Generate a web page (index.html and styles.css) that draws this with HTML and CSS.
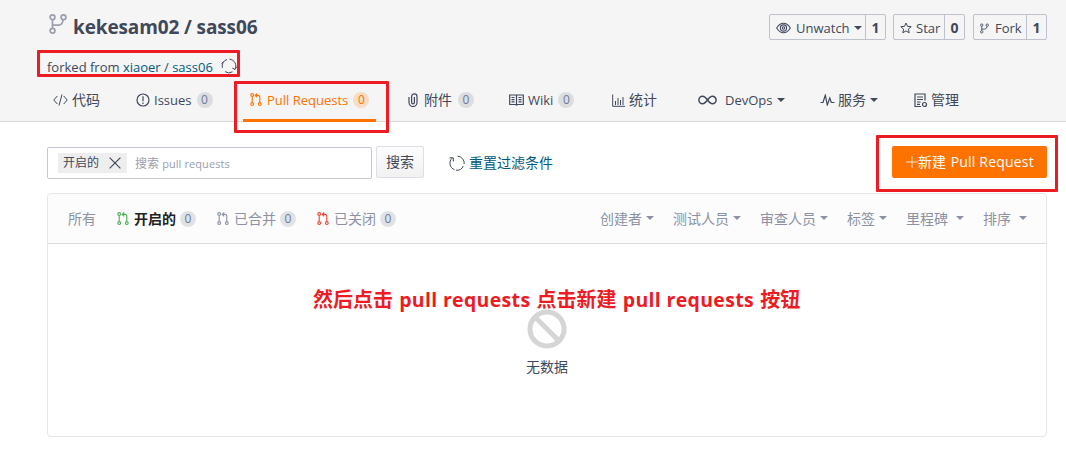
FILE: index.html
```html
<!DOCTYPE html>
<html lang="zh-CN">
<head>
<meta charset="utf-8">
<title>kekesam02 / sass06 - Pull Requests</title>
<link rel="stylesheet" href="styles.css">
</head>
<body>
<svg class="defs" width="0" height="0" aria-hidden="true">
  <symbol id="pr" viewBox="0 0 12 13"><g fill="none" stroke="currentColor" stroke-width="1.1"><circle cx="2.2" cy="2" r="1.4"/><circle cx="2.2" cy="11" r="1.4"/><circle cx="9.8" cy="11" r="1.4"/><path d="M2.2 3.5v6M9.8 9.5V4.2Q9.8 2.4 8 2.4H5.4M7.2.5 5.2 2.4l2 1.9"/></g></symbol>
  <symbol id="fork" viewBox="0 0 18 20"><g fill="none" stroke="currentColor" stroke-width="1.7"><circle cx="3.5" cy="3.3" r="2.4"/><circle cx="3.5" cy="16.7" r="2.4"/><circle cx="14.5" cy="3.3" r="2.4"/><path d="M3.5 5.8v8.4M3.5 11.2H9.8Q13.6 10.8 14 5.8"/></g></symbol>
</svg>
<header class="top">
  <div class="repo-row">
    <svg class="repo-icon"><use href="#fork"/></svg>
    <h1 class="title">kekesam02 / sass06</h1>
    <div class="actions">
      <div class="action watch"><span class="label"><svg class="eye" viewBox="0 0 15 12" fill="none" stroke="currentColor" stroke-width="1.1"><path d="M.7 6Q3.5 1.2 7.5 1.2T14.3 6Q11.500 10.800 7.500 10.800T.7 6z"/><circle cx="7.500" cy="6" r="3.100"/><circle cx="7.500" cy="6" r="1.200"/></svg><span>Unwatch</span><i class="caret"></i></span><b>1</b></div>
      <div class="action star"><span class="label"><svg class="star-icon" viewBox="0 0 12 12" fill="none" stroke="currentColor"><path d="M6 1 7.500 4.300 11.200 4.700 8.400 7.100 9.200 10.800 6 8.900 2.800 10.800 3.600 7.100.8 4.700 4.500 4.300z"/></svg><span>Star</span></span><b>0</b></div>
      <div class="action forks"><span class="label"><svg class="fork-icon"><use href="#fork"/></svg><span>Fork</span></span><b>1</b></div>
    </div>
  </div>
  <div class="forked"><span>forked from <a>xiaoer</a> / <a>sass06</a></span><svg class="sync" viewBox="0 0 16 16" fill="none" stroke="#40485b" stroke-width="1"><path d="M8.500 1.200A6.800 6.800 0 0 1 14 11.200M15.600 8.800 14 11.500l-2.700-1.400M11.500 13.800A6.800 6.800 0 0 1 4 13.600M1.400 9.800A6.800 6.800 0 0 1 6 1.500M.6 5.500 2.500 3.500"/></svg></div>
  <nav class="tabs">
    <div class="tab"><svg class="i-code" viewBox="0 0 15 12" fill="none" stroke="currentColor"><path d="M4.300 2 .8 6l3.500 4M10.700 2l3.500 4-3.500 4M9 .5 6 11.500"/></svg><span class="zh">代码</span></div>
    <div class="tab"><svg class="i-issue" viewBox="0 0 14 14" fill="none" stroke="currentColor" stroke-width="1.200"><circle cx="7" cy="7" r="6"/><path d="M7 3.200v5M7 9.500v1.500"/></svg><span>Issues</span><em>0</em></div>
    <div class="tab active"><svg class="i-pr"><use href="#pr"/></svg><span>Pull Requests</span><em>0</em></div>
    <div class="tab"><svg class="i-clip" viewBox="0 0 10 14" fill="none" stroke="currentColor" stroke-width="1.200"><path d="M1 4v5.500a4 4 0 0 0 8 0V3.500a2.700 2.700 0 0 0-5.400 0v6a1.400 1.400 0 0 0 2.800 0V4"/></svg><span class="zh">附件</span><em>0</em></div>
    <div class="tab"><svg class="i-wiki" viewBox="0 0 15 12" fill="none" stroke="currentColor" stroke-width="1.200"><path d="M.7 1h13.600v9.500H8.700l-1.200 .5-1.200-.5H.7zM7.500 1v10M2.500 3.500h3M2.500 5.700h3M2.500 7.900h3M9.500 3.500h3M9.500 5.700h3M9.500 7.900h3"/></svg><span>Wiki</span><em>0</em></div>
    <div class="tab"><svg class="i-stat" viewBox="0 0 13 13" fill="none" stroke="currentColor"><path d="M.7.500v11.800H13M3.500 7v4M6 4v7M8.500 6v5M11 3v8"/></svg><span class="zh">统计</span></div>
    <div class="tab"><svg class="i-dev" viewBox="0 0 19 10" fill="none" stroke="currentColor" stroke-width="1.500"><path d="M9.500 5C7.500 2.300 6.200 1.300 4.600 1.300a3.700 3.700 0 0 0 0 7.400C6.200 8.700 7.500 7.700 9.500 5s3.300-3.700 4.900-3.700a3.700 3.700 0 0 1 0 7.400C12.800 8.700 11.500 7.700 9.500 5z"/></svg><span>DevOps</span><i class="caret"></i></div>
    <div class="tab"><svg class="i-pulse" viewBox="0 0 15 12" fill="none" stroke="currentColor" stroke-width="1.200"><path d="M.5 8.500H3L5.300 1.200 7.300 11l2.500-7 1.500 4.500h3.200"/></svg><span class="zh">服务</span><i class="caret"></i></div>
    <div class="tab"><svg class="i-manage" viewBox="0 0 14 15" fill="none" stroke="currentColor" stroke-width="1.200"><path d="M7 13.500H1V1h10v6.500M3 4h6M3 6.500h6M3 9h3.500M3 11.300h3"/><circle cx="10.500" cy="11.500" r="2"/></svg><span class="zh">管理</span></div>
  </nav>
</header>
<main class="content">
  <div class="filters">
    <div class="search"><span class="tag">开启的<svg viewBox="0 0 12 12" fill="none" stroke="currentColor" stroke-width="1.200"><path d="m.6.6 10.800 10.800M11.400.6.6 11.400"/></svg></span><span class="placeholder">搜索 <span>pull requests</span></span></div>
    <button class="search-btn">搜索</button>
    <a class="reset"><svg viewBox="0 0 16 16" fill="none" stroke="#40485b" stroke-width="1"><path d="M3 3.200A7 7 0 0 0 5.500 14.700M7 15.200A7 7 0 0 0 14.300 11M15.200 9A7 7 0 0 0 8.500 1.200M.5 2.800h3.800v3.700"/></svg>重置过滤条件</a>
    <button class="create"><svg viewBox="0 0 12 12" stroke="#ffe2c8"><path d="M6 0v12M0 6h12"/></svg>新建 <span>Pull Request</span></button>
  </div>
  <section class="panel">
    <div class="panel-head">
      <div class="states">
        <span class="state">所有</span>
        <span class="state open"><svg><use href="#pr"/></svg>开启的<em>0</em></span>
        <span class="state merged"><svg><use href="#pr"/></svg>已合并<em>0</em></span>
        <span class="state closed"><svg><use href="#pr"/></svg>已关闭<em>0</em></span>
      </div>
      <div class="sorts">
        <span>创建者<i class="caret"></i></span><span>测试人员<i class="caret"></i></span><span>审查人员<i class="caret"></i></span><span>标签<i class="caret"></i></span><span class="wide">里程碑<i class="caret"></i></span><span class="wide">排序<i class="caret"></i></span>
      </div>
    </div>
    <div class="empty">
      <svg viewBox="0 0 40 40" fill="none" stroke="#d5d5d5" stroke-width="5"><circle cx="20" cy="20" r="17"/><path d="m8 8 24 24"/></svg>
      <p>无数据</p>
    </div>
  </section>
</main>
<div class="mark mark-fork"></div>
<div class="mark mark-tab"></div>
<div class="mark mark-create"></div>
<p class="note">然后点击 <span>pull requests</span> 点击新建 <span>pull requests</span> 按钮</p>
</body>
</html>
```
FILE: styles.css
```css
* { box-sizing: border-box; }
body { margin: 0; width: 1066px; height: 463px; overflow: hidden; position: relative; background: #fff; color: #40485b; font: 13px/20px "Open Sans", "Noto Sans CJK SC", sans-serif; }
svg { display: block; flex: none; }
.defs { position: absolute; }
em, i { font-style: normal; }
a { color: #005980; }
button { font: inherit; margin: 0; padding: 0; }
.top { height: 122px; background: #f5f5f5; border-bottom: 1px solid #d9dadb; }
.repo-row { display: flex; height: 54px; padding: 14px 19px 0 49px; align-items: flex-start; }
.repo-icon { width: 18px; height: 20px; color: #9b9eac; }
.title { margin: -1px 0 0 6px; font-size: 19px; line-height: 28px; font-weight: 700; letter-spacing: -0.12px; white-space: nowrap; }
.actions { display: flex; margin-left: auto; }
.action { display: flex; height: 26px; border: 1px solid #bfc1cc; border-radius: 2px; white-space: nowrap; }
.action .label { flex: 1; display: flex; align-items: center; padding: 2px 0 0 6px; }
.action b { width: 20px; border-left: 1px solid #bfc1cc; text-align: center; line-height: 26px; font-size: 14px; }
.watch { width: 117px; margin-right: 7px; }
.star { width: 72px; margin-right: 8px; }
.forks { width: 74px; }
.eye { width: 15px; height: 12px; margin-right: 5px; }
.star-icon { width: 12px; height: 12px; margin-right: 4px; }
.fork-icon { width: 9px; height: 11px; margin-right: 6px; }
.caret { display: block; flex: none; border: 4px solid transparent; border-top-color: currentColor; border-bottom: 0; margin-left: 4px; }
.forked { display: flex; height: 26px; padding: 3px 0 0 47px; white-space: nowrap; }
.sync { width: 16px; height: 16px; margin: 1px 0 0 8px; }
.tabs { display: grid; height: 42px; margin-left: 46px; grid-template-columns: 83px 114px 158px 101px 103px 86px 122px 94px 80px; }
.tab { display: flex; align-items: center; height: 42px; padding: 0 0 2px 7px; white-space: nowrap; }
.tab .zh { font-size: 14px; }
.tab em, .state em { display: block; width: 16px; height: 16px; border-radius: 50%; background: #dcdddf; color: #6c7a9c; font-size: 12px; font-weight: 400; line-height: 16px; text-align: center; margin-left: 5px; }
.tab.active { width: 133px; border-bottom: 3px solid #fe7300; padding-bottom: 0; color: #fe7300; }
.tab.active em { background: #f8dcc4; color: #fe7300; }
.tab .zh + em { margin-left: 6px; }
.i-code { width: 15px; height: 12px; margin-right: 4px; }
.i-issue { width: 14px; height: 14px; margin-right: 4px; }
.i-pr { width: 12px; height: 13px; margin-right: 5px; }
.i-clip { width: 10px; height: 14px; margin-right: 6px; }
.i-wiki { width: 15px; height: 12px; margin-right: 4px; }
.i-stat { width: 13px; height: 13px; margin-right: 4px; }
.i-dev { width: 19px; height: 10px; margin-right: 8px; }
.i-pulse { width: 15px; height: 12px; margin-right: 3px; }
.i-manage { width: 14px; height: 15px; margin-right: 3px; }
.content { padding: 24px 19px 0 47px; }
.filters { display: flex; height: 47px; align-items: flex-start; }
.search { display: flex; align-items: center; width: 325px; height: 32px; margin-top: 1px; padding-left: 10px; border: 1px solid #c5c7d1; border-radius: 2px; font-size: 12px; }
.tag { display: flex; align-items: center; width: 69px; height: 20px; padding-left: 5px; background: #eee; }
.tag svg { width: 12px; height: 12px; margin-left: 10px; }
.placeholder { margin: 2px 0 0 8px; color: #9a9eac; }
.placeholder span { font-size: 11px; letter-spacing: 0.08px; }
.search-btn { width: 48px; height: 32px; margin-left: 4px; border: 1px solid #dce0e6; border-radius: 2px; background: linear-gradient(#fdfdfd, #f1f1f1); color: #40485b; font-size: 14px; }
.reset { display: flex; align-items: center; height: 34px; margin-left: 25px; font-size: 14px; }
.reset svg { width: 16px; height: 16px; margin-right: 4px; }
.create { display: flex; align-items: center; width: 155px; height: 32px; margin-left: auto; padding-left: 14px; border: 0; border-radius: 2px; background: #fe7300; color: #fff; font-size: 14px; white-space: pre; }
.create svg { width: 12px; height: 12px; }
.create span { margin-left: 1px; letter-spacing: 0.2px; }
.panel { height: 244px; border: 1px solid #e3e6ea; border-radius: 4px; }
.panel-head { display: flex; justify-content: space-between; height: 50px; border-bottom: 1px solid #dcdddf; background: #fcfcfc; border-radius: 4px 4px 0 0; color: #8c92a4; font-size: 14px; }
.states, .sorts { display: flex; align-items: center; white-space: nowrap; }
.states { padding-left: 20px; gap: 21px; }
.state { display: flex; align-items: center; }
.state svg { width: 12px; height: 13px; margin-right: 5px; color: #8c92a4; }
.state em { margin-left: 4px; background: #e0e2e5; }
.state.open { color: #222; font-weight: 700; }
.state.open svg { color: #4caf50; }
.state.closed svg { color: #f44336; }
.sorts { padding-right: 19px; gap: 19px; }
.sorts span { display: flex; align-items: center; }
.sorts .caret { margin-bottom: 2px; }
.sorts .wide .caret { margin-left: 8px; }
.empty { display: flex; flex-direction: column; align-items: center; padding-top: 65px; }
.empty svg { width: 40px; height: 40px; }
.empty p { margin: 8px 0 0; font-size: 14px; }
.mark { position: absolute; border: 3px solid #ed1c24; border-radius: 1px; }
.mark-fork { left: 37px; top: 50px; width: 203px; height: 27px; }
.mark-tab { left: 234px; top: 81px; width: 155px; height: 52px; }
.mark-create { left: 876px; top: 135px; width: 182px; height: 57px; }
.note { position: absolute; left: 313px; top: 286px; margin: 0; color: #ed1c24; font-size: 20px; line-height: 28px; font-weight: 700; white-space: nowrap; }
.note span { margin: 0 1px; font-size: 19.5px; letter-spacing: 0.32px; }
```
